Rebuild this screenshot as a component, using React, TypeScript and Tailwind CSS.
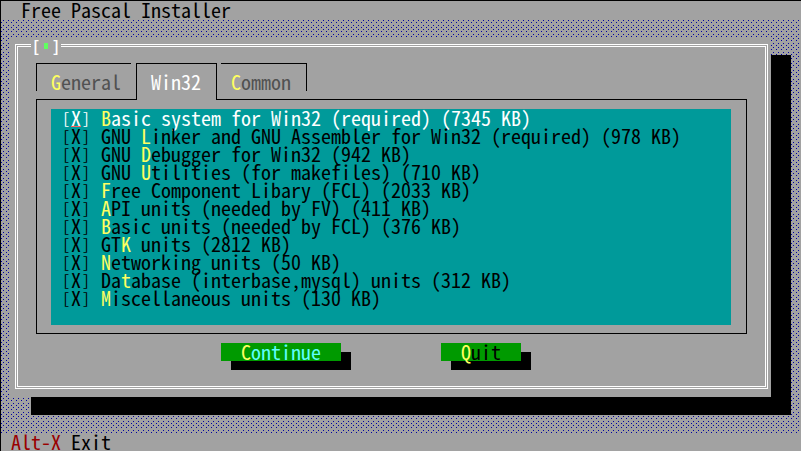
import React, { useState } from "react";

type Label = { before?: string; hot: string; after: string };

const components: Label[] = [
  { hot: "B", after: "asic system for Win32 (required) (7345 KB)" },
  { before: "GNU ", hot: "L", after: "inker and GNU Assembler for Win32 (required) (978 KB)" },
  { before: "GNU ", hot: "D", after: "ebugger for Win32 (942 KB)" },
  { before: "GNU ", hot: "U", after: "tilities (for makefiles) (710 KB)" },
  { hot: "F", after: "ree Component Libary (FCL) (2033 KB)" },
  { hot: "A", after: "PI units (needed by FV) (411 KB)" },
  { hot: "B", after: "asic units (needed by FCL) (376 KB)" },
  { before: "GT", hot: "K", after: " units (2812 KB)" },
  { hot: "N", after: "etworking units (50 KB)" },
  { before: "Da", hot: "t", after: "abase (interbase,mysql) units (312 KB)" },
  { hot: "M", after: "iscellaneous units (130 KB)" },
];

function Hot({ before, hot, after }: Label) {
  return (
    <span>
      {before}
      <span className="text-[#ffff60]">{hot}</span>
      {after}
    </span>
  );
}

function Bracket({ children }: { children: string }) {
  return <span className="w-[10px] text-center text-[15px] leading-[18px]">{children}</span>;
}

function Desktop() {
  return (
    <svg className="absolute inset-0 h-full w-full" aria-hidden="true" shapeRendering="crispEdges">
      <defs>
        <pattern id="dots" width="10" height="18" patternUnits="userSpaceOnUse">
          <path
            fill="#0000a0"
            d="M2 1h1v1h-1zM7 1h1v1h-1zM0 3h1v1h-1zM5 3h1v1h-1zM2 6h1v1h-1zM7 6h1v1h-1zM0 8h1v1h-1zM5 8h1v1h-1zM2 10h1v1h-1zM7 10h1v1h-1zM0 12h1v1h-1zM5 12h1v1h-1zM2 15h1v1h-1zM7 15h1v1h-1zM0 17h1v1h-1zM5 17h1v1h-1z"
          />
        </pattern>
      </defs>
      <rect width="100%" height="100%" fill="url(#dots)" />
    </svg>
  );
}

function ComponentRow({ item, active }: { item: Label; active: boolean }) {
  const [checked, setChecked] = useState(true);
  return (
    <label className={`relative flex h-[18px] whitespace-pre ${active ? "text-white" : "text-black"}`}>
      <input
        type="checkbox"
        className="sr-only"
        checked={checked}
        onChange={(e) => setChecked(e.target.checked)}
      />
      <span className="flex w-10">
        <Bracket>[</Bracket>
        <span className={`w-[10px] ${active ? "shadow-[inset_0_-1px_#ff6060]" : ""}`}>
          {checked ? "X" : " "}
        </span>
        <Bracket>]</Bracket>
      </span>
      <Hot {...item} />
    </label>
  );
}

export default function App() {
  return (
    <div className="flex min-h-screen flex-col border-t border-l border-black bg-[#a2a2a2] font-['Noto_Sans_Mono_CJK_SC','Liberation_Mono',monospace] text-[20px] leading-[18px] text-black">
      <header className="px-5">
        <h1>Free Pascal Installer</h1>
      </header>

      <main className="relative flex-1 pt-[18px] pr-[30px] pb-9 pl-[10px]">
        <Desktop />
        <section className="relative bg-[#a2a2a2] pt-[7px] pr-[3px] pb-2 pl-1 shadow-[20px_18px_#000]">
          <div className="relative border-[3px] border-double border-white px-[18px] pt-4 pb-[25px]">
            <button
              type="button"
              aria-label="Close"
              className="absolute -top-[10px] left-[13px] flex h-[18px] w-[30px] items-center justify-between bg-[#a2a2a2] font-bold text-white"
            >
              <Bracket>[</Bracket>
              <span className="h-[6px] w-1 bg-[#60ff60]" />
              <Bracket>]</Bracket>
            </button>

            <div role="tablist" className="flex h-9 items-start text-[#515151]">
              <button
                type="button"
                role="tab"
                aria-selected="false"
                className="mr-[5px] h-7 w-[95px] border-t border-l border-black pt-[9px] pl-[14px] text-left"
              >
                <Hot hot="G" after="eneral" />
              </button>
              <button
                type="button"
                role="tab"
                aria-selected="true"
                className="relative mr-1 h-[37px] w-[81px] border-x border-t border-black bg-[#a2a2a2] pt-[9px] pb-[9px] pl-[14px] text-left text-white"
              >
                Win32
              </button>
              <button
                type="button"
                role="tab"
                aria-selected="false"
                className="h-7 w-[86px] border-t border-r border-black pt-[9px] pl-[10px] text-left"
              >
                <Hot hot="C" after="ommon" />
              </button>
            </div>

            <div role="tabpanel" className="border border-black pt-[9px] pr-[15px] pb-2 pl-[14px]">
              <div className="bg-[#009a9a] pb-[18px] pl-[10px]">
                {components.map((item, i) => (
                  <ComponentRow key={i} item={item} active={i === 0} />
                ))}
              </div>
            </div>

            <div className="mt-[9px] flex justify-center gap-[100px] pr-[41px]">
              <button type="button" className="h-[18px] w-[120px] bg-[#009a00] text-[#60ffff] shadow-[10px_9px_#000]">
                <Hot hot="C" after="ontinue" />
              </button>
              <button type="button" className="h-[18px] w-20 bg-[#009a00] shadow-[10px_9px_#000]">
                <Hot hot="Q" after="uit" />
              </button>
            </div>
          </div>
        </section>
      </main>

      <footer className="flex px-[10px]">
        <button type="button" className="flex gap-[10px]">
          <span className="text-[#9a0000]">Alt-X</span>
          <span>Exit</span>
        </button>
      </footer>
    </div>
  );
}
